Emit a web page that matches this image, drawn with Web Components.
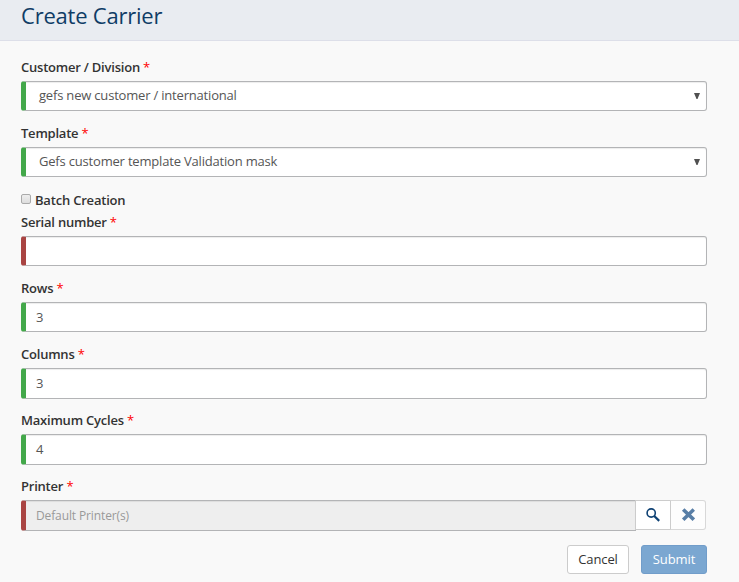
<!DOCTYPE html>
<html lang="en">
<head>
<meta charset="utf-8">
<title>Create Carrier</title>
<style>
html,body{margin:0;height:100%;overflow:hidden;background:#f9f9f9}
body{font:13px/20px "Open Sans",sans-serif;color:#555}
</style>
</head>
<body>
<carrier-form></carrier-form>
<script>
class PageHeader extends HTMLElement {
  constructor() {
    super();
    this.attachShadow({mode: 'open'}).innerHTML = `
      <style>
        :host{display:block;box-sizing:border-box;height:41px;padding:0 21px;background:#e9ecf1;border-bottom:1px solid #dddfe9}
        h1{margin:0;font-size:22px;font-weight:400;line-height:30px;letter-spacing:-.22px;color:#0f3c66}
      </style>
      <h1><slot></slot></h1>`;
  }
}
customElements.define('page-header', PageHeader);

class FormField extends HTMLElement {
  constructor() {
    super();
    this.attachShadow({mode: 'open'}).innerHTML = `
      <style>
        :host{display:flex;flex-direction:column;gap:4px;margin-bottom:12px}
        .label{height:20px;font-weight:600;letter-spacing:-.22px;color:#333;white-space:nowrap}
        .label i{font-style:normal;font-weight:400;color:#f00}
        .row{display:flex;align-items:flex-start}
      </style>
      <div class="label"><span></span> <i>*</i></div>
      <div class="row"><slot></slot></div>`;
    this.shadowRoot.querySelector('span').textContent = this.getAttribute('label');
  }
}
customElements.define('form-field', FormField);

class FieldBox extends HTMLElement {
  constructor() {
    super();
    this.attachShadow({mode: 'open'}).innerHTML = `
      <style>
        :host{display:flex;flex:1;box-sizing:border-box;height:30px;padding:0 6px 0 10px;line-height:28px;
          align-items:flex-start;justify-content:space-between;background:#fff;border:1px solid #b3b4b6;
          border-left:5px solid #43a84a;border-radius:3px;box-shadow:inset 0 1px 1px rgba(0,0,0,.075);white-space:nowrap}
        :host([tall]){height:31px;line-height:29px}
        :host([invalid]){border-left-color:#a94442}
        :host([select]){padding-left:13px;line-height:26px;letter-spacing:-.19px}
        :host([disabled]){background:#eee;color:#999;border-radius:3px 0 0 3px;font-size:12px;letter-spacing:-.12px}
        svg{display:none;width:6px;height:6px;margin-top:11px}
        :host([select]) svg{display:block}
      </style>
      <span><slot></slot></span>
      <svg viewBox="0 0 6 6"><path d="M0 0H6L3.5 6H2.5Z" fill="#505050"/></svg>`;
  }
}
customElements.define('field-box', FieldBox);

class CheckOption extends HTMLElement {
  constructor() {
    super();
    this.attachShadow({mode: 'open'}).innerHTML = `
      <style>
        :host{display:flex;gap:4px;height:20px;margin:13px 0 2px;font-weight:600;letter-spacing:-.2px;color:#333}
        .box{box-sizing:border-box;width:10px;height:10px;margin-top:4px;border:1px solid #aaa;
          border-radius:2px;background:linear-gradient(#eee,#ddd)}
      </style>
      <span class="box"></span><span><slot></slot></span>`;
  }
}
customElements.define('check-option', CheckOption);

class IconButton extends HTMLElement {
  constructor() {
    super();
    const icons = {
      search: '<circle cx="5.2" cy="5" r="4.1" fill="none" stroke="#0f4274" stroke-width="1.6"/><path d="M8.2 8 13.2 12.9" stroke="#0f4274" stroke-width="2.2"/>',
      clear: '<path d="M2.2 1.5 12.8 11.7M12.8 1.5 2.2 11.7" stroke="#587ea6" stroke-width="3.6"/>'
    };
    this.attachShadow({mode: 'open'}).innerHTML = `
      <style>
        :host{display:flex;box-sizing:border-box;width:36px;height:30px;margin-left:-1px;padding:7px 0 0 0;
          justify-content:center;align-items:flex-start;background:#fff;border:1px solid #ccc}
        :host([icon=clear]){background:#fdfdfd;border-color:#d8d8d8 #d8d8d8 #d8d8d8 #ccc;border-radius:0 3px 3px 0}
        svg{display:block}
      </style>
      <svg width="14" height="14" viewBox="0 0 14 14">${icons[this.getAttribute('icon')]}</svg>`;
  }
}
customElements.define('icon-button', IconButton);

class ActionButton extends HTMLElement {
  constructor() {
    super();
    this.attachShadow({mode: 'open'}).innerHTML = `
      <style>
        :host{display:block;box-sizing:border-box;width:62px;height:29px;line-height:27px;text-align:center;
          letter-spacing:-.1px;background:#fff;color:#333;border:1px solid #ccc;border-radius:3px}
        :host([primary]){width:66px;background:#7ba7d1;border-color:#719dca;color:#fff}
      </style>
      <slot></slot>`;
  }
}
customElements.define('action-button', ActionButton);

class CarrierForm extends HTMLElement {
  constructor() {
    super();
    this.attachShadow({mode: 'open'}).innerHTML = `
      <style>
        :host{display:block}
        main{padding:16px 32px 0 21px}
        .tight{margin-bottom:11px}
        .last{margin-bottom:14px}
        footer{display:flex;justify-content:flex-end;gap:12px}
      </style>
      <page-header>Create Carrier</page-header>
      <main>
        <form-field label="Customer / Division"><field-box select>gefs new customer / international</field-box></form-field>
        <form-field label="Template"><field-box select>Gefs customer template Validation mask</field-box></form-field>
        <check-option>Batch Creation</check-option>
        <form-field label="Serial number"><field-box invalid></field-box></form-field>
        <form-field label="Rows"><field-box>3</field-box></form-field>
        <form-field class="tight" label="Columns"><field-box tall>3</field-box></form-field>
        <form-field class="tight" label="Maximum Cycles"><field-box tall>4</field-box></form-field>
        <form-field class="last" label="Printer">
          <field-box tall invalid disabled>Default Printer(s)</field-box>
          <icon-button icon="search"></icon-button>
          <icon-button icon="clear" style="margin-right:1px"></icon-button>
        </form-field>
        <footer><action-button>Cancel</action-button><action-button primary>Submit</action-button></footer>
      </main>`;
  }
}
customElements.define('carrier-form', CarrierForm);
</script>
</body>
</html>
